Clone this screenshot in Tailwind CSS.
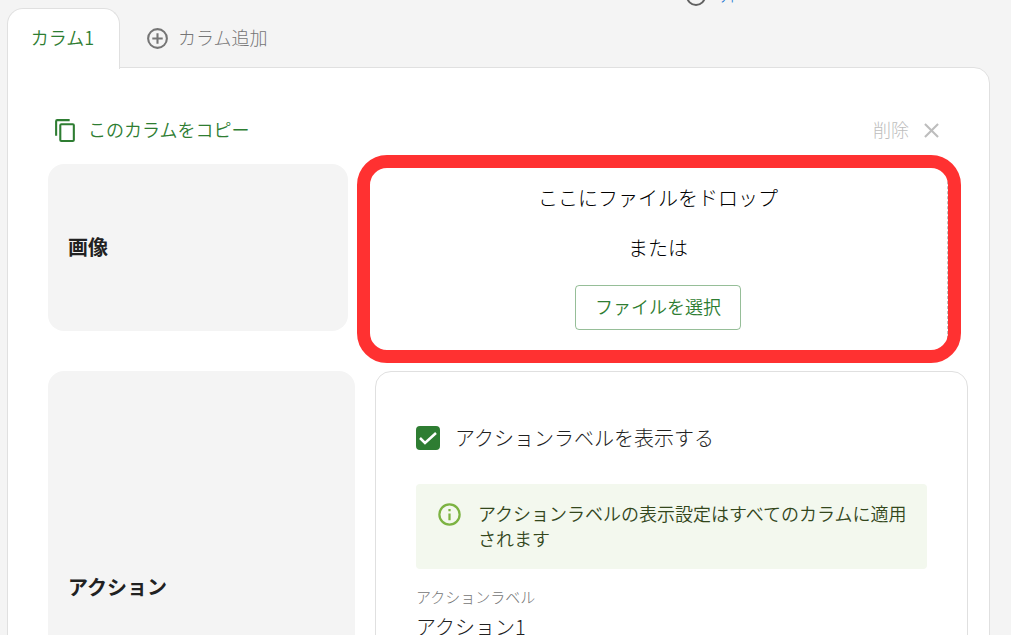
<!DOCTYPE html>
<html lang="ja">

<head>
    <meta charset="UTF-8">
    <meta name="viewport" content="width=device-width, initial-scale=1.0">
    <title>カラム設定</title>
    <script src="https://cdn.jsdelivr.net/npm/@tailwindcss/browser@4"></script>
</head>

<body class="h-screen overflow-hidden bg-[#f4f4f4] font-['Noto_Sans_CJK_JP',sans-serif] font-light text-[#212121]">

    <!-- ヘルプ (上にスクロール済み) -->
    <div class="-mt-5 flex h-7 items-start justify-end gap-3 pr-[273px]">
        <svg class="mt-1 size-6 fill-[#616161]" viewBox="0 0 24 24" aria-hidden="true">
            <path d="M12 2a10 10 0 1 0 0 20 10 10 0 0 0 0-20zm0 18a8 8 0 1 1 0-16 8 8 0 0 1 0 16z" />
        </svg>
        <a href="#" class="text-lg leading-[26px] text-[#1976d2]">介</a>
    </div>

    <!-- タブ -->
    <nav class="flex h-[60px] items-stretch pl-[7px]">
        <button class="relative z-10 -mb-px w-[113px] rounded-t-2xl border border-b-0 border-[#e0e0e0] bg-white pr-0.5 pb-1 text-lg leading-[26px] font-[350] text-[#2e7d32]">カラム1</button>
        <button class="flex items-center gap-2 pl-[25px] text-lg leading-[26px] text-[#757575]">
            <svg class="size-[25px] fill-[#757575]" viewBox="0 0 24 24" aria-hidden="true">
                <path d="M13 7h-2v4H7v2h4v4h2v-4h4v-2h-4V7zm-1-5a10 10 0 1 0 0 20 10 10 0 0 0 0-20zm0 18a8 8 0 1 1 0-16 8 8 0 0 1 0 16z" />
            </svg>
            <span class="pb-0.5">カラム追加</span>
        </button>
    </nav>

    <main class="-mt-px ml-[7px] mr-[21px] rounded-tr-2xl border border-[#e0e0e0] bg-white pl-10 pr-[21px] pt-[46px]">
        <div class="flex items-center justify-between pb-[18px] pl-[5px] pr-6">
            <button class="flex items-center gap-2.5 text-lg leading-[30px] font-[350] text-[#2e7d32]">
                <svg class="size-[25px] fill-[#2e7d32]" viewBox="0 0 24 24" aria-hidden="true">
                    <path d="M16 1H4a2 2 0 0 0-2 2v14h2V3h12V1zm3 4H8a2 2 0 0 0-2 2v14a2 2 0 0 0 2 2h11a2 2 0 0 0 2-2V7a2 2 0 0 0-2-2zm0 16H8V7h11v14z" />
                </svg>
                <span class="pb-0.5">このカラムをコピー</span>
            </button>
            <button class="flex items-center gap-2.5 text-lg leading-[30px] text-[#bdbdbd]">
                <span class="pb-0.5">削除</span>
                <svg class="size-[25px] fill-[#bdbdbd]" viewBox="0 0 24 24" aria-hidden="true">
                    <path d="M19 6.41L17.59 5 12 10.59 6.41 5 5 6.41 10.59 12 5 17.59 6.41 19 12 13.41 17.59 19 19 17.59 13.41 12z" />
                </svg>
            </button>
        </div>

        <!-- 画像 -->
        <section class="relative flex gap-5 pr-5">
            <h2 class="flex h-[167px] w-[300px] shrink-0 items-center rounded-2xl bg-[#f4f4f4] px-5 pb-0.5 text-xl font-bold">画像</h2>
            <div class="-mb-6 flex flex-1 flex-col items-center rounded-2xl border border-dashed border-[#bdbdbd] pt-[18px] text-xl leading-[30px] text-black">
                <p>ここにファイルをドロップ</p>
                <p class="mt-5">または</p>
                <button class="mt-[22px] h-[45px] rounded border border-[#2e7d32]/50 px-[19px] pb-1 text-lg leading-[26px] font-[350] text-[#2e7d32]">ファイルを選択</button>
            </div>
            <!-- 強調枠 -->
            <div class="pointer-events-none absolute -top-[9px] -bottom-8 left-[309px] right-[7px] rounded-[30px] border-[13px] border-[#ff3131]"></div>
        </section>

        <!-- アクション -->
        <section class="mt-10 flex gap-5">
            <h2 class="flex h-[432px] w-[307px] shrink-0 items-center rounded-2xl bg-[#f4f4f4] px-5 text-xl font-bold">アクション</h2>
            <div class="flex-1 rounded-2xl border border-[#e0e0e0] p-10 pt-[51px]">
                <label class="flex items-center gap-[15px] text-xl leading-[30px]">
                    <span class="relative flex size-6">
                        <input type="checkbox" checked class="size-6 appearance-none rounded-sm border-2 border-[#616161] checked:border-[#2e7d32] checked:bg-[#2e7d32]">
                        <svg class="pointer-events-none absolute inset-0 size-6 fill-none stroke-white stroke-[2.5]" viewBox="0 0 24 24" aria-hidden="true">
                            <path d="M4 12l5 5L20 7" />
                        </svg>
                    </span>
                    アクションラベルを表示する
                </label>
                <div class="mt-[31px] flex gap-[15px] rounded bg-[#f3f8ee] pt-[17px] pb-[18px] pl-5 pr-4">
                    <svg class="size-[27px] shrink-0 fill-[#7cb342]" viewBox="0 0 24 24" aria-hidden="true">
                        <path d="M11 7h2v2h-2zM11 11h2v6h-2zM12 2a10 10 0 1 0 0 20 10 10 0 0 0 0-20zm0 18a8 8 0 1 1 0-16 8 8 0 0 1 0 16z" />
                    </svg>
                    <p class="text-lg leading-[25px] font-[350] text-[#33471c]">アクションラベルの表示設定はすべてのカラムに適用されます</p>
                </div>
                <label for="action-label" class="mt-[15px] block text-[15px] leading-[25px] text-[#757575]">アクションラベル</label>
                <input id="action-label" type="text" value="アクション1" class="block h-9 w-full border-b border-[#949494] text-xl">
            </div>
        </section>
    </main>

</body>

</html>
